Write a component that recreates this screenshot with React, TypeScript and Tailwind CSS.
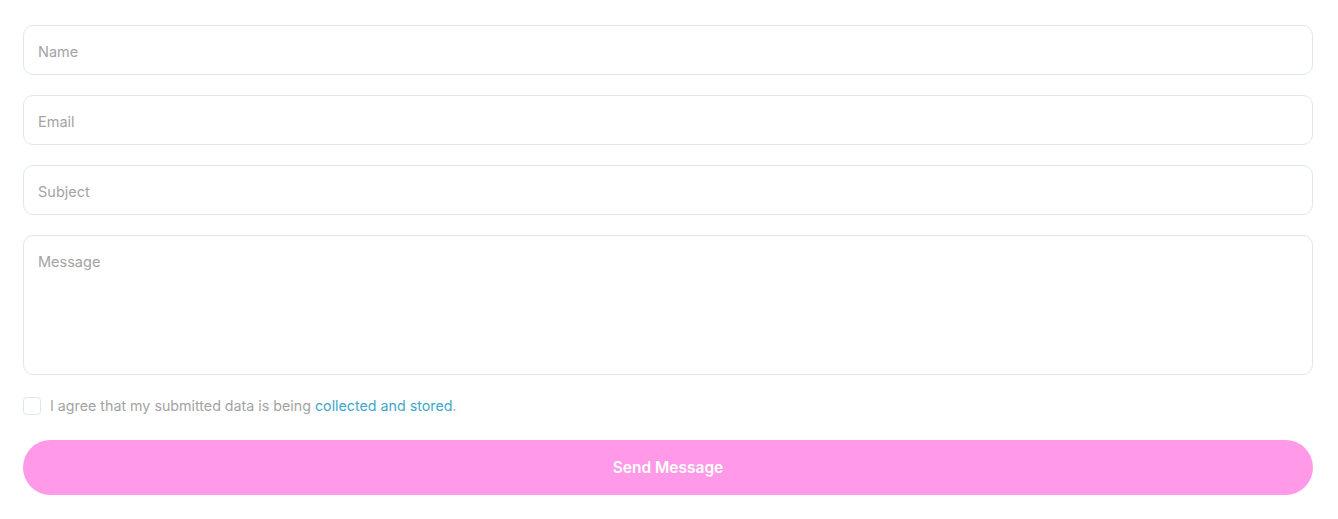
import React from 'react';

const fieldClass =
  'w-full rounded-[10px] border border-[#dde8f0] bg-white px-[14px] text-[14.5px] text-[#555] placeholder:text-[#a3a3a3] outline-none';

export default function App() {
  return (
    <div className="min-h-[519px] bg-white" style={{ fontFamily: 'Inter, "Noto Sans", sans-serif' }}>
      <form className="ml-[23px] w-[1290px] pt-[25px] flex flex-col">
        <input className={`${fieldClass} h-[50px] pt-[2px]`} placeholder="Name" />
        <input className={`${fieldClass} h-[50px] pt-[2px] mt-[20px]`} placeholder="Email" />
        <input className={`${fieldClass} h-[50px] pt-[2px] mt-[20px]`} placeholder="Subject" />
        <textarea className={`${fieldClass} h-[140px] mt-[20px] pt-[15px] resize-none`} placeholder="Message" />

        <label className="mt-[21px] flex h-[20px] items-center gap-[9px] text-[14.25px] text-[#a3a3a3]">
          <span className="h-[18px] w-[18px] shrink-0 rounded-[4px] border border-[#dde8f0] bg-white"></span>
          <span>
            I agree that my submitted data is being{' '}
            <a className="text-[#3ea7c8]">collected and stored</a>.
          </span>
        </label>

        <button
          type="button"
          className="mt-[24px] h-[55px] w-full rounded-full bg-[#ff99e8] text-[15.5px] font-semibold text-white"
        >
          Send Message
        </button>
      </form>
    </div>
  );
}
